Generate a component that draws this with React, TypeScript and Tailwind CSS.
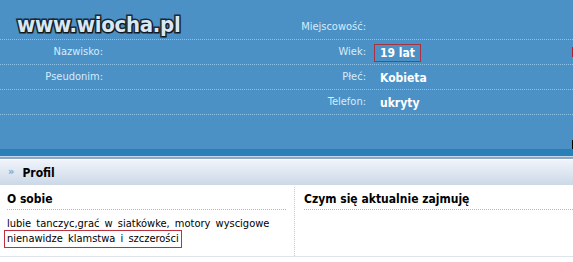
import React from "react";

const F = "font-['DejaVu_Sans_Condensed','DejaVu_Sans',sans-serif] [font-stretch:condensed]";

function Row({
  leftLabel,
  rightLabel,
  rightValue,
  boxed,
}: {
  leftLabel?: string;
  rightLabel: string;
  rightValue?: string;
  boxed?: boolean;
}) {
  return (
    <div className="flex h-[25px] items-center border-b border-dotted border-[#8ec3e8]">
      <div className="flex w-[283px] items-center">
        <div className="w-[103px] text-right text-[11px] text-[#d6ecfb]">{leftLabel}</div>
      </div>
      <div className="flex items-center">
        <div className="w-[83px] text-right text-[11px] text-[#d6ecfb]">{rightLabel}</div>
        {rightValue && (
          <div className="ml-[8px]">
            <span
              className={
                boxed
                  ? "inline-block h-[18px] border border-[#a8323f] px-[5px] text-[12px] font-bold leading-[16px] text-white"
                  : "inline-block px-[6px] text-[12px] font-bold text-white"
              }
            >
              {rightValue}
            </span>
          </div>
        )}
      </div>
    </div>
  );
}

export default function App() {
  return (
    <div className={`relative h-[262px] w-[573px] overflow-hidden bg-white ${F}`}>
      {/* blue top section */}
      <div className="h-[149px] bg-[#4b91c6] pt-[15px]">
        <Row rightLabel="Miejscowość:" />
        <Row leftLabel="Nazwisko:" rightLabel="Wiek:" rightValue="19 lat" boxed />
        <Row leftLabel="Pseudonim:" rightLabel="Płeć:" rightValue="Kobieta" />
        <Row rightLabel="Telefon:" rightValue="ukryty" />
      </div>
      <div className="h-[7px] bg-[#2a7fb6]" />
      <div className="h-[1px] bg-[#c4d6e8]" />
      <div className="h-[2px] bg-[#8ea8c6]" />
      <div className="h-[1px] bg-white" />
      {/* Profil header */}
      <div className="flex h-[25px] items-center bg-gradient-to-b from-[#f0f4fa] to-[#ccd8e8] pl-[8px]">
        <span className="mr-[8px] text-[11px] font-bold text-[#7aa6d0]">»</span>
        <span className="text-[12px] font-bold text-black">Profil</span>
      </div>
      <div className="h-[2px] bg-white" />
      {/* two columns */}
      <div className="flex border-b border-[#dfe3ea]">
        <div className="w-[295px] border-r border-dotted border-[#c8c8c8] pb-[8px] pl-[7px] pr-[8px]">
          <div className="border-b border-dotted border-[#b8b8b8] pb-[1px] pt-[3px] text-[12px] font-bold text-black">
            O sobie
          </div>
          <div className="pt-[6px] text-[11px] leading-[16px] text-black [word-spacing:2px]">
            <div className="whitespace-nowrap">lubie tanczyc,grać w siatkówke, motory wyscigowe</div>
            <div className="-ml-[3px] -mt-[2px] block w-fit h-[18px] border border-[#c0303c] px-[2px] leading-[16px]">
              nienawidze klamstwa i szczerości
            </div>
          </div>
        </div>
        <div className="flex-1 pl-[9px]">
          <div className="border-b border-dotted border-[#b8b8b8] pb-[1px] pt-[3px] text-[12px] font-bold text-black">
            Czym się aktualnie zajmuję
          </div>
        </div>
      </div>
      {/* watermark logo */}
      <div className="absolute left-[17px] top-[14px] font-['DejaVu_Sans',sans-serif] text-[22px] font-bold leading-none tracking-[-0.3px] text-[#d8e8f4] [-webkit-text-stroke:3px_#1c2835] [paint-order:stroke_fill] [text-shadow:1px_1px_1px_#0d1520]">
        www.wiocha.pl
      </div>
      {/* cut-off edge marks */}
      <div className="absolute right-0 top-[47px] h-[10px] w-[1px] bg-[#b02030]" />
      <div className="absolute right-0 top-[140px] h-[9px] w-[1px] bg-black" />
    </div>
  );
}
